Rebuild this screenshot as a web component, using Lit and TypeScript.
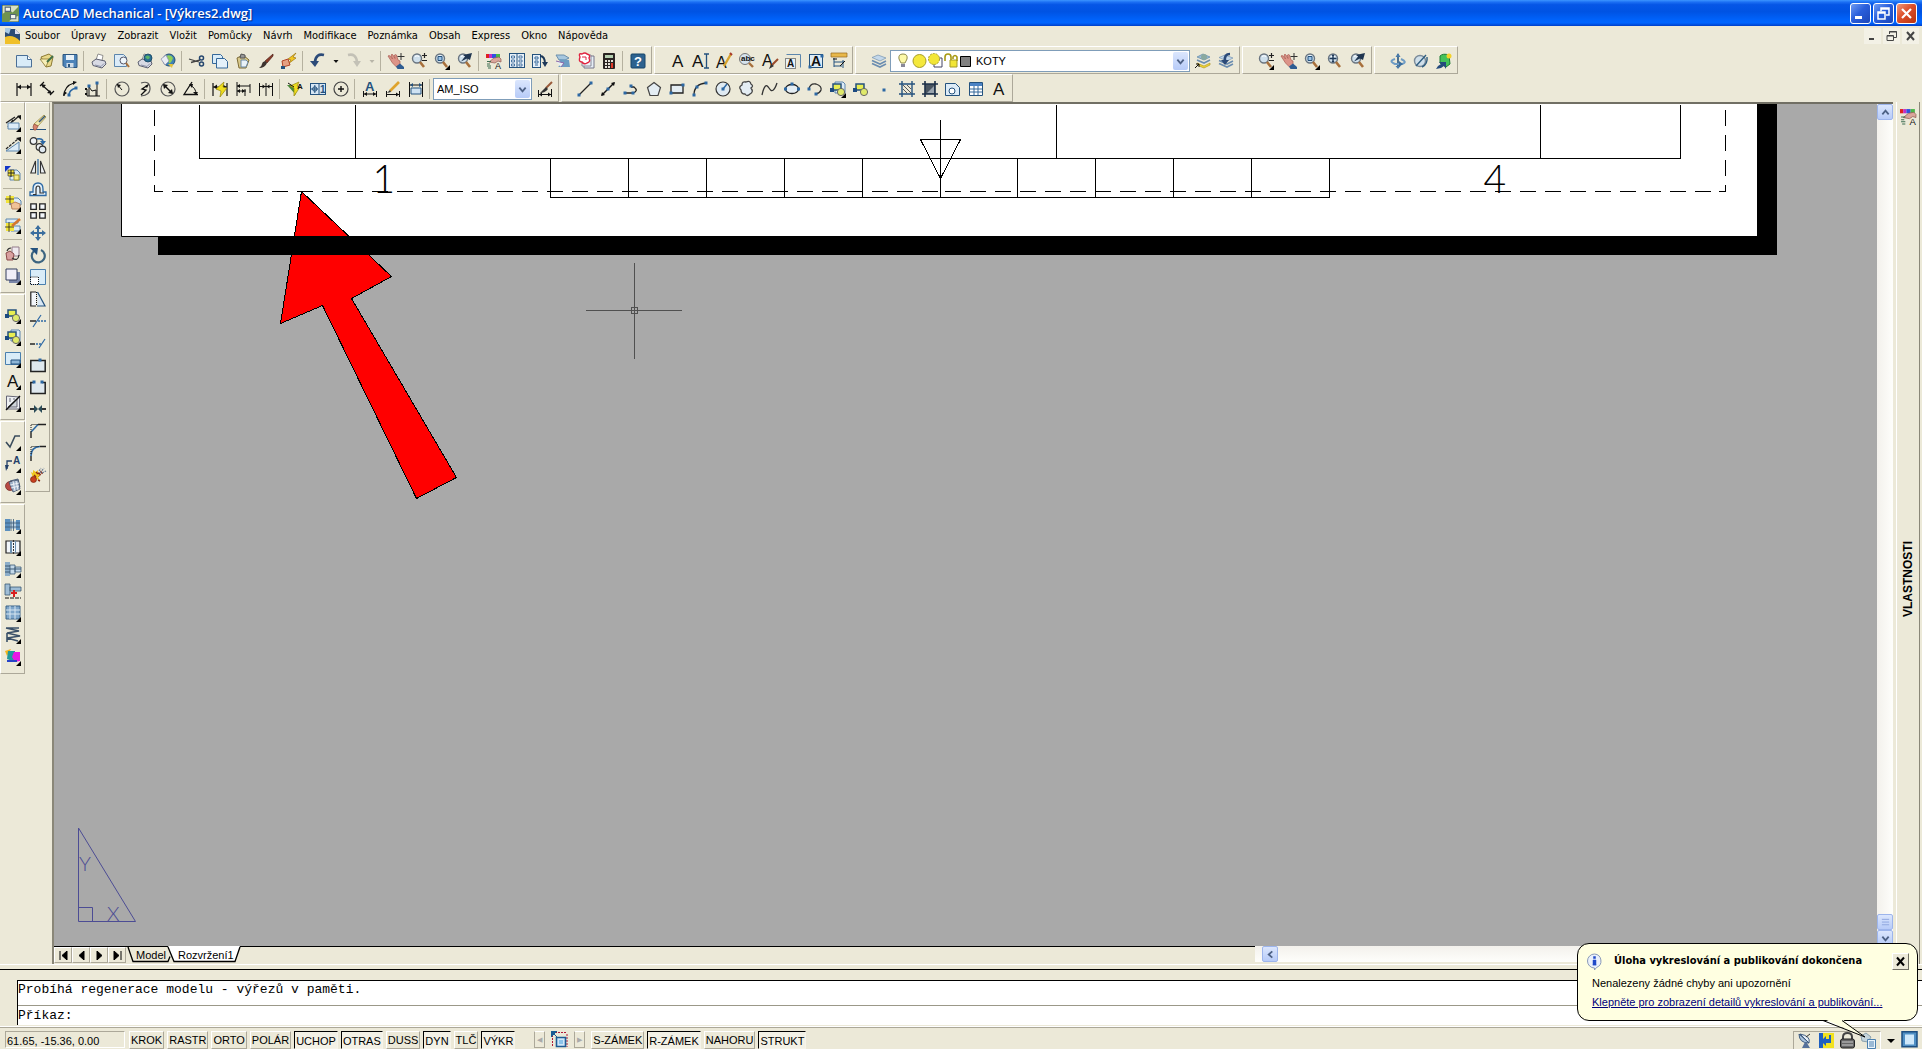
import { LitElement, html, css, svg, nothing, TemplateResult } from "lit";
import { customElement, property } from "lit/decorators.js";
import { classMap } from "lit/directives/class-map.js";

const letter = (t: string, x: number, y: number, size: number, color = "#111", weight = 400) =>
  svg`<text x=${x} y=${y} font-family="Liberation Sans, sans-serif" font-size=${size} font-weight=${weight} fill=${color}>${t}</text>`;

const lens = svg`<circle cx="6" cy="5.5" r="4.5" fill="#cfe0ec" stroke="#6a7580" stroke-width="1.4"/><path d="M9 9l4 5" stroke="#a8703c" stroke-width="2.6"/><path d="M4 3.500q2-1.500 4 0" stroke="#fff" fill="none"/>`;
const hand = svg`<path d="M0 3q1-1 2 0l2.500 3L3 2q1-1.500 2 0l2 3.500L6.500 2q1-1 2 0L10 7l2 1v3.500L8.500 14l-4-4z" fill="#dc9488" stroke="#a85a50" stroke-width=".7"/><path d="M8 13.500l4-3 4 3.500V16H9.500z" fill="#2f5d92"/><path d="M13 0v7M9.500 3.500h7" stroke="#333"/>`;
const zoomPrev = svg`${lens}<path d="M15 0L6 2l2 1.500-4 5 6-3 3 1.500z" fill="#1f3550"/>`;
const zoomRt = svg`${lens}<path d="M13.500 0v5M11 2.500h5M11 7.500h5" stroke="#222" stroke-width="1.200"/>`;
const zoomWin = svg`${lens}<path d="M4 3.500h4v4H4z" fill="#9cc3e6" stroke="#24527e"/>`;
const globe = svg`<circle cx="11" cy="5" r="4" fill="#2a6f93" stroke="#17425f" stroke-width=".8"/><path d="M8 4q3-3 5 0-1 3-3 2z" fill="#59b36a"/>`;
const printer = svg`<path d="M5 7l2-6 5 1.500-1 5z" fill="#fff" stroke="#777" stroke-width=".8"/><path d="M1 9l4-3 9 2 1 3-4 4L2 12.500z" fill="#d8dae4" stroke="#5d6070"/><path d="M4 12l6 1.500 3-3" stroke="#8990a8" fill="none"/>`;
const shapes = svg`<rect x="3" y="3" width="8" height="6" fill="#e8ee52" stroke="#24527e" stroke-width="1.500"/><circle cx="11" cy="11" r="3.600" fill="#dfe96a" stroke="#666"/><rect x="0" y="7" width="4" height="4" fill="#1c4a80"/>`;
const layers = svg`<path d="M1 4.500L7 2l8 3-6 3z" fill="#c4d8ea" stroke="#7593b0" stroke-width=".7"/><path d="M1 7.500l8 3.500 6-3M1 10.500l8 3.500 6-3" fill="none" stroke="#6b8db0" stroke-width="1.600"/>`;
const props = svg`<path d="M0 1h3v4H0z" fill="#e02020"/><path d="M3 1h3v4H3z" fill="#c030c8"/><path d="M6 1h4v4H6z" fill="#2f50e0"/><path d="M10 1h4v4h-4z" fill="#48b848"/><path d="M3 9l5-4 5-1 2 2v3l-3-1-3 2z" fill="#dba59b" stroke="#8f5b52" stroke-width=".7"/><path d="M1 8.500h4M1 11h3M1 13h4M2 15h3" stroke="#3b6c50"/>${letter("A", 9, 16, 9)}`;
const dimH = svg`<path d="M1 2v13M15 2v13M1 6h14" stroke="#111" stroke-width="1.200"/><path d="M1.500 6L5 3.500v5zM14.500 6L11 3.500v5z" fill="#111"/>`;
const node = (x: number, y: number) => svg`<rect x=${x - 1.5} y=${y - 1.5} width="3" height="3" fill="#2c68a4"/>`;

const ICONS: Record<string, TemplateResult> = {
  new: svg`<path d="M.5 2.500h11l4 4v7.500H.5z" fill="#d9ecf8" stroke="#4a6f96"/><path d="M11.500 2.500v4h4" fill="#fff" stroke="#4a6f96"/>`,
  open: svg`<path d="M2 4l8-3 4 3-2 9-5 1z" fill="#e9d98a" stroke="#8c7a34"/><path d="M1 6l6 8 3-8z" fill="#f7efb8" stroke="#8c7a34" stroke-width=".8"/><path d="M8 9l6-6" stroke="#3f6f46" stroke-width="2"/>`,
  save: svg`<path d="M1 1.500h14v13H3l-2-2z" fill="#4c83b9" stroke="#2d567f"/><path d="M4 2h8v5H4z" fill="#e8f1f8"/><path d="M4.500 10h7v4.500h-7z" fill="#cfdce8"/><path d="M6 11h2v3H6z" fill="#2d567f"/>`,
  print: printer,
  preview: svg`<path d="M.5 1.500h9l3 3v9H.5z" fill="#dcecf8" stroke="#5c86ad"/><circle cx="9.500" cy="7.500" r="3.500" fill="#eef6fb" stroke="#556"/><path d="M12 10l3 4" stroke="#a8703c" stroke-width="2"/>`,
  publish: svg`${printer}${globe}`,
  web: svg`<circle cx="9" cy="7" r="6" fill="#3f82b5" stroke="#274f72"/><path d="M6 3q5-2 7 2-2 6-4 5z" fill="#8fcf58"/><path d="M1 6l5-4 3 6-4 4z" fill="#e9edf4" stroke="#88a" stroke-width=".7"/><path d="M8 11l4 4 1-4z" fill="#e6c43a"/>`,
  cut: svg`<path d="M0 6l10 3M2 9.500l9-2.500" stroke="#444" stroke-width="1.300"/><circle cx="12.500" cy="5" r="2" fill="none" stroke="#24466e" stroke-width="1.500"/><circle cx="12.500" cy="11" r="2" fill="none" stroke="#24466e" stroke-width="1.500"/>`,
  copy: svg`<path d="M.5 1.500h8l2 2v7H.5z" fill="#d9ecf8" stroke="#35689a"/><path d="M4.500 5.500h8l3 3V15h-11z" fill="#e4f1fa" stroke="#35689a"/>`,
  paste: svg`<path d="M2 5l6-3 6 5-3 8H4z" fill="#d9c98a" stroke="#7e6c35"/><path d="M6 1l4 1v3H5z" fill="#999" stroke="#555"/><path d="M6 7h5l2 2-2 5H6z" fill="#e9f2f8" stroke="#6b88a5"/>`,
  brush: svg`<path d="M15 1L7 8l2 2 6-7z" fill="#8b3b28" stroke="#4a2018" stroke-width=".7"/><path d="M7 8l2 2q-2 5-8 5 3-2 3-4t3-3z" fill="#3d3430"/>`,
  block: svg`<path d="M15 0L7 6l3 1-3 4 8-6-3-1z" fill="#f0c520" stroke="#9c7410" stroke-width=".7"/><path d="M1 8l6-2 2 6-7 2z" fill="#e5a182" stroke="#b24526"/><path d="M0 13h4v3H0z" fill="#24527e"/>`,
  undo: svg`<path d="M14 2Q6 0 5 9" fill="none" stroke="#2b4a78" stroke-width="2.800"/><path d="M0 8h9l-4 6z" fill="#2b4a78"/>`,
  redo: svg`<path d="M2 2q8-2 9 7" fill="none" stroke="#c3c1b6" stroke-width="2.600"/><path d="M7 8h8l-4 6z" fill="#c3c1b6"/>`,
  pan: hand, zoomRt, zoomWin, zoomPrev,
  zoomAll: svg`${lens}<path d="M6 2v7M2.500 5.500h7" stroke="#1d3858" stroke-width="1.400"/><path d="M6 1l1.500 2h-3zM6 10l1.500-2h-3z" fill="#1d3858"/>`,
  props,
  design: svg`<rect x=".5" y=".5" width="15" height="14" fill="#e7f0f8" stroke="#24527e"/><path d="M8 1v13" stroke="#24527e"/><path d="M2.500 3h3v2h-3zM10 3h3v2h-3zM2.500 7h3v2h-3zM10 7h3v2h-3zM2.500 11h3v2h-3zM10 11h3v2h-3z" fill="#fff" stroke="#35689a" stroke-width=".9"/>`,
  palettes: svg`<rect x=".5" y="1.500" width="8" height="13" fill="#e7f0f8" stroke="#24527e"/><path d="M3 4h3v2H3zM3 8h3v2H3zM3 12h3" stroke="#35689a" fill="#fff"/><path d="M8 3q5 0 5 8" stroke="#1d3858" stroke-width="2" fill="none"/><path d="M10 9h6l-3 5z" fill="#1d3858"/>`,
  sheets: svg`<path d="M1 2h8l5 3-4 2H4z" fill="#a7c7de" stroke="#6d90ad"/><path d="M4 6l10 1 1 7H3l3-3z" fill="#6d9dc3"/><path d="M1 8l8 2-3 4" fill="#e8eff4" stroke="#86a"/>`,
  markup: svg`<path d="M6 3h10v12H6z" fill="#e6eef6" stroke="#778"/><path d="M4 2h9v11H4z" fill="#eef3f8" stroke="#889"/><path d="M2 4q-2-4 2-3 3-2 5 0 4 1 2 4 2 4-2 5-3 2-5-1-4 0-2-5z" fill="#fff" stroke="#e02440" stroke-width="1.400"/><path d="M4 4h4v3" stroke="#e02440" fill="none"/>`,
  calc: svg`<rect x="2" y="0" width="12" height="16" rx="1" fill="#2a2422"/><path d="M4 2h8v3H4z" fill="#b5cfb0"/><path d="M4 7h2v2H4zM7 7h2v2H7zM10 7h2v2h-2zM4 10h2v2H4zM7 10h2v2H7zM4 13h2v2H4zM7 13h2v2H7z" fill="#e6e2da"/><path d="M10 10h2v5h-2z" fill="#e03a2a"/>`,
  help: svg`<rect x="1" y="1" width="14" height="14" rx="1" fill="#2d628f" stroke="#174468"/>${letter("?", 4, 13, 13, "#fff", 700)}`,
  text: letter("A", 2, 14, 17),
  textI: svg`${letter("A", -1, 14, 17)}<path d="M11 1h5M11 15h5M13.500 1v14" stroke="#24527e" stroke-width="1.300"/>`,
  textEdit: svg`${letter("A", 0, 15, 16)}<path d="M15 1L8 13" stroke="#d6a32e" stroke-width="2.400"/><path d="M14 0l2 2" stroke="#a83a2a" stroke-width="2"/>`,
  textFind: svg`<circle cx="6" cy="6" r="5.500" fill="#d5e3ee" stroke="#777"/><path d="M10 10l4 4" stroke="#a8703c" stroke-width="2.400"/>${letter("abc", 2, 8, 8, "#111", 700)}`,
  textStyle: svg`${letter("A", 0, 13, 16)}<path d="M16 6l-6 6" stroke="#9a4a2a" stroke-width="2"/><path d="M9 11l3 2-5 3z" fill="#333"/>`,
  textScale: svg`<path d="M1.500 1.500h14v13" fill="none" stroke="#5c86ad"/><rect x=".5" y="5.500" width="10" height="10" fill="#e8f1f8" stroke="#222" stroke-dasharray="1 1"/>${letter("A", 2, 14, 10, "#111", 700)}`,
  textJust: svg`<rect x="1.500" y="1.500" width="13" height="13" fill="#dcebf7" stroke="#24527e"/>${letter("A", 3, 13, 14, "#111", 700)}${node(14, 3)}${node(2, 14)}`,
  textConv: svg`<path d="M0 0h16v4H0z" fill="#e8b84a" stroke="#96681e" stroke-width=".7"/><path d="M3 5v9M3 9h10M3 13h8M12 7v8" stroke="#24527e"/><path d="M2 6h4M14 8l-5 5" stroke="#111"/>`,
  layers,
  layerCur: svg`<path d="M2 4L8 1l7 3-6 3z" fill="#9cbdd6" stroke="#5f87a8" stroke-width=".7"/><circle cx="9" cy="4" r="3" fill="#8aa9a0"/><path d="M2 7l7 3 6-3" fill="none" stroke="#6b8db0" stroke-width="1.600"/><path d="M2 10l7 3 6-3v2l-6 3-5-2z" fill="#f2d633" stroke="#a88f1c" stroke-width=".6"/><path d="M0 15l4-4M1 11h3v3" stroke="#111" fill="none"/>`,
  layerPrev: svg`${layers}<path d="M12 1Q6 1 7 8" stroke="#2b4a78" stroke-width="2.600" fill="none"/><path d="M3 7h8l-4 5z" fill="#2b4a78"/>`,
  orbitUp: svg`<path d="M8 1v14" stroke="#24527e" stroke-width="1.600"/><path d="M8 0l2.500 4h-5zM8 16l2.500-3h-5z" fill="#4a7ba8"/><path d="M5 6q-7 2 0 5h7q6-2-1-5" fill="none" stroke="#6f9cc4" stroke-width="2"/><path d="M9 8l4 3-4 3z" fill="#3b6e9e"/>`,
  orbit: svg`<circle cx="7" cy="8" r="5.500" fill="#cfdfea" stroke="#7b8b99" stroke-width="1.400"/><path d="M3 13L13 2M14 4q1 7-5 10" stroke="#2f5d80" stroke-width="1.400" fill="none"/>`,
  render: svg`<path d="M4 3q3-3 9-1l1 9-4 3-6-4z" fill="#44c25a" stroke="#1d7a34"/><circle cx="13" cy="3" r="2.500" fill="#f4d22a"/><path d="M0 16l2-3 3-2-2-2h7v7L8 13l-3 2z" fill="#244a7c"/>`,
  dimH,
  dimAl: svg`<path d="M1 5l4-4M11 14l4-4M3 4l9 8" stroke="#111" stroke-width="1.200"/><path d="M2 3l5 1-3 3zM13 13l-5-1 3-3z" fill="#111"/>`,
  dimArc: svg`<path d="M2 15Q2 5 12 2" fill="none" stroke="#111" stroke-width="1.300"/><path d="M7 14q0-5 7-7" fill="none" stroke="#2c68a4" stroke-width="1.600"/><path d="M15 1l-4 3V0zM1 15l1-5 3 2z" fill="#111"/>${node(7, 14)}${node(14, 7)}`,
  dimOrd: svg`<path d="M4 15V6l3 4 4-1v6M2 8v7h13M12 3v12" stroke="#111" fill="none"/>${node(4, 5)}${node(12, 2)}<path d="M0 7h2v2H0zM0 12h2v2H0z" fill="#111"/>`,
  dimRad: svg`<circle cx="8" cy="8" r="7" fill="none" stroke="#555" stroke-width="1.200"/><path d="M8 9L3 3" stroke="#111"/><path d="M3 3l4 1-3 3z" fill="#111"/>`,
  dimJog: svg`<path d="M4 2q9-3 9 6 0 6-9 7" fill="none" stroke="#555" stroke-width="1.200"/><path d="M11 4L5 8l4 1-5 5" fill="none" stroke="#111" stroke-width="1.300"/><path d="M12 3l-2 4-2-2z" fill="#111"/>`,
  dimDia: svg`<circle cx="8" cy="8" r="7" fill="none" stroke="#555" stroke-width="1.200"/><path d="M4 4l8 8" stroke="#111" stroke-width="1.400"/><path d="M3 3l5 1-4 4zM13 13l-5-1 4-4z" fill="#111"/>`,
  dimAng: svg`<path d="M9 1L1 13.500h14" fill="none" stroke="#111" stroke-width="1.300"/><path d="M7 4q6 3 6 9" fill="none" stroke="#111"/><path d="M6 3l4 0-1 4zM13 14l-3-3h5z" fill="#111"/>`,
  dimQuick: svg`${dimH}<path d="M8 16l1-6-5-2L12 1l-1 5 4 1z" fill="#eedd1e" stroke="#95850c" stroke-width=".7"/>`,
  dimBase: svg`<path d="M2 1v14M2 5h13M2 10h9M15 3v9M10 8v7" stroke="#111" fill="none"/><path d="M2 5l3-2v4zM2 10l3-2v4zM10 10l-3-2v4z" fill="#111"/>`,
  dimCont: svg`<path d="M1.500 2v13M8 2v13M14.500 2v13M2 5.500h12" stroke="#111"/><path d="M7.500 5.500l-3-2v4zM8.500 5.500l3-2v4z" fill="#111"/>`,
  leader: svg`<path d="M0 4l7 0 2 10z" fill="#4a8a3a"/><path d="M7 15V7L3 5l9-4-2 4 3 1z" fill="#eedd1e" stroke="#95850c" stroke-width=".7"/>${letter("A", 10, 8, 8, "#111", 700)}<path d="M1 2l6 4" stroke="#111"/>`,
  tol: svg`<rect x=".5" y="2.500" width="15" height="11" fill="#d7e7f5" stroke="#24527e"/><path d="M9 2v11" stroke="#24527e"/><circle cx="4.800" cy="8" r="2.200" fill="none" stroke="#24527e"/><path d="M4.800 4v8M1 8h7" stroke="#24527e"/>${letter("1", 10, 12, 10, "#24527e", 700)}`,
  center: svg`<circle cx="8" cy="8" r="7" fill="none" stroke="#444" stroke-width="1.200"/><path d="M8 5v6M5 8h6" stroke="#111" stroke-width="1.400"/>`,
  dimText: svg`${letter("A", 3, 10, 13, "#24527e", 700)}<path d="M1.500 10v6M14.500 10v6M2 13h12" stroke="#111"/><path d="M2 13l3-2v4zM14 13l-3-2v4z" fill="#111"/>`,
  dimEdit: svg`<path d="M14 1L5 10" stroke="#dfa32c" stroke-width="2.600"/><path d="M2 12l3-3 1 2z" fill="#333"/><path d="M1.500 10v6M14.500 10v6M2 13.500h12" stroke="#111"/><path d="M14 13.500l-3-2v4z" fill="#111"/>`,
  dimUpd: svg`<path d="M1.500 1v15M14.500 1v15M2 4h12" stroke="#111"/><path d="M3 7h10v6H3z" fill="#cfe2f2" stroke="#24527e"/><path d="M2 4l3-2v4zM14 4l-3-2v4z" fill="#24527e"/>`,
  dimStyle: svg`<path d="M15 1L9 7" stroke="#9a5a3a" stroke-width="2"/><path d="M9 6l2 2q-3 4-8 4z" fill="#333"/><path d="M1.500 9v7M14.500 8v8M2 13.500h12" stroke="#111"/><path d="M2 13.500l3-2v4zM14 13.500l-3-2v4z" fill="#111"/>`,
  line: svg`<path d="M2 14L14 2" stroke="#222" stroke-width="1.300"/>${node(2, 14)}${node(14, 2)}`,
  xline: svg`<path d="M2 14L14 2" stroke="#111" stroke-width="1.500"/><path d="M15 1l-1 4-3-3zM1 15l1-4 3 3z" fill="#111"/>${node(8, 8)}`,
  pline: svg`<path d="M1 12h9q6-2 1-6H8" stroke="#222" stroke-width="1.300" fill="none"/>${node(2, 12)}${node(10, 12)}${node(8, 5)}`,
  polygon: svg`<path d="M8 1.500l6.500 5-2.500 8H4l-2.500-8z" fill="#e4edf3" stroke="#444" stroke-width="1.200"/>`,
  rect: svg`<path d="M2 4h12v8H2z" fill="#e4edf3" stroke="#222" stroke-width="1.300"/>${node(2, 12)}${node(14, 4)}`,
  arc: svg`<path d="M2 14Q2 3 14 2" stroke="#222" fill="none" stroke-width="1.300"/>${node(2, 14)}${node(5, 6)}${node(14, 2)}`,
  circle: svg`<circle cx="8" cy="8" r="7" fill="#dfeaf2" stroke="#333" stroke-width="1.200"/><path d="M8 8l4-5" stroke="#2c68a4" stroke-width="1.500"/>${node(8, 8)}`,
  cloud: svg`<path d="M4 4q0-4 4-3 4-2 5 2 3 2 0 4 3 4-1 6-3 3-5 0-4 0-4-4-3-3 1-5z" fill="#e4edf3" stroke="#444" stroke-width="1.300"/>`,
  spline: svg`<path d="M1 14q3-14 7-7t8-5" stroke="#333" fill="none" stroke-width="1.300"/>`,
  ellipse: svg`<ellipse cx="8" cy="8" rx="6.500" ry="4.500" fill="#e4edf3" stroke="#222" stroke-width="1.300"/>${node(8, 3)}${node(1.500, 8)}${node(14.500, 8)}`,
  ellArc: svg`<path d="M2 8q1-6 7-5 6 2 5 6-1 3-5 4" stroke="#333" fill="none" stroke-width="1.300"/>${node(2, 8)}${node(9, 13)}`,
  insert: svg`<path d="M5 1h8l2 2v9H5z" fill="#dcebf7" stroke="#5c86ad"/>${shapes}`,
  mkBlock: shapes,
  point: node(8, 9),
  hatch: svg`<path d="M3 0v16M13 0v16M0 3h16M0 13h16" stroke="#24527e" stroke-width="1.400"/><path d="M4 4l8 8M4 8l4 4M8 4l4 4" stroke="#555"/>`,
  gradient: svg`<path d="M3 3h10v10H3z" fill="#4a5560"/><path d="M3 0v16M13 0v16M0 3h16M0 13h16" stroke="#1d3048" stroke-width="1.600"/><path d="M5 12L12 5v7z" fill="#99a4ae"/>`,
  region: svg`<path d="M.5 2.500h10l4 4v8H.5z" fill="#dcebf7" stroke="#24527e"/><circle cx="7" cy="10" r="3" fill="#fff" stroke="#24527e"/>`,
  table: svg`<path d="M1.500 1.500h13v13h-13z" fill="#fff" stroke="#24527e"/><path d="M2 2h12v3H2z" fill="#4c83c4"/><path d="M2 8h12M2 11h12M6 5v9M10 5v9" stroke="#35689a"/>`,
  // side column, mechanical tools
  mLine: svg`<path d="M1 8L10 2M14 1L7 7M3 12L8 5" stroke="#222" stroke-width="1.300"/><path d="M16 0v5l-4-4z" fill="#111"/><path d="M3 8h11v6H3z" fill="#dcebf7" stroke="#5c86ad"/>`,
  mConstr: svg`<path d="M1 12L13 2" stroke="#222" stroke-width="1.200" stroke-dasharray="3 1"/><path d="M16 0v5l-5-4z" fill="#111"/><path d="M1 14h13V5z" fill="#dcebf7" stroke="#5c86ad"/>`,
  mView: svg`<path d="M0 0h6L0 6z" fill="#1236c8"/><path d="M5 4h7l3 3v7H5z" fill="#dcebf7" stroke="#5c86ad"/><path d="M3 4h6v6H3z" fill="#f2e43a" stroke="#222" stroke-width=".6"/><path d="M9 9h5v5H9z" fill="#f4ec8a" stroke="#a79a28"/><path d="M6 4v7M3 7h7" stroke="#222"/>`,
  mDetail: svg`<path d="M6 3h7l3 3v4H6z" fill="#dcebf7" stroke="#5c86ad"/><path d="M1 1h8v7H1z" fill="#f2e43a"/><path d="M5 0v10M0 4h9" stroke="#222" stroke-width=".8"/><path d="M6 9l4-2 5 2v5H7z" fill="#f0c298" stroke="#b9825a"/>`,
  mEditV: svg`<path d="M1 2h12v4H1zM6 9h9v5H6z" fill="#dcebf7" stroke="#5c86ad"/><path d="M1 6h8v8H1z" fill="#f2e43a"/><path d="M4 5v10M0 10h9" stroke="#222" stroke-width=".8"/><path d="M15 2L7 9" stroke="#d6762e" stroke-width="2.600"/>`,
  mPart: svg`<path d="M7 1h7v9H7z" fill="#efe9ee" stroke="#937b8a"/><path d="M1 7l4-2 4 3-1 6H2z" fill="#d9a0a0" stroke="#8a4a4a"/><path d="M7 12q6 4 7-3M2 5q1-3 4-3" stroke="#333" fill="none" stroke-width="1.200"/>`,
  mFrame: svg`<path d="M4 4h11v11H4z" fill="#7a86a8"/><path d="M1 1h11v11H1z" fill="#f0eef8" stroke="#333c5c"/>`,
  mSheet: svg`<path d="M.5 1.500h15v12H.5z" fill="#d9ecf8" stroke="#4a7fae"/><path d="M6 9h9v4H6z" fill="#8db5d6" stroke="#24527e"/>`,
  mBlocks: shapes,
  mInsert: svg`<path d="M6 1h8l1 1v10H6z" fill="#dcebf7" stroke="#5c86ad"/>${shapes}`,
  mDim: svg`<path d="M1.500 1v13h13V2z" fill="#eef0f2" stroke="#667"/><path d="M5 3v4M9 3v2M3 12l9-8v8z" fill="#cfd4da" stroke="#667"/><path d="M1 15L15 1" stroke="#111" stroke-width="1.400"/>`,
  surf: svg`<path d="M1 8l4 5L10 2h5" fill="none" stroke="#3a4c5c" stroke-width="1.600"/>`,
  note: svg`<path d="M2 13V5h5" stroke="#24406a" fill="none" stroke-width="1.300"/><path d="M0 9h4l-3 6z" fill="#24406a"/>${letter("A", 8, 8, 10, "#24406a", 700)}`,
  bom: svg`<path d="M5 3l8-2 2 8-7 3z" fill="#b8c8da" stroke="#4a5b74"/><circle cx="5" cy="8" r="4.500" fill="#b84a44" stroke="#6f2824" stroke-width=".7"/><path d="M4 4l9-2 2 9-7 3z" fill="#9fb2c9" stroke="#3f4f6a" stroke-width=".8"/><path d="M5 7l9-2M6 10l8-2M8 3l2 10M11 3l2 9" stroke="#f0f4f8" stroke-width=".9"/>`,
  screw: svg`<path d="M0 2h5v12H0zM11 3h4v10h-4z" fill="#5b8fbe"/><path d="M5 4h6v8H5z" fill="#b9cfe0"/><path d="M6 2v12M8.500 2v12M0 6h15M0 10h15" stroke="#3a5874" stroke-width=".8"/>`,
  hole: svg`<path d="M1 2h14v12H1z" fill="#f2f6fa" stroke="#222" stroke-width="1.200"/><path d="M5 2h2v12H5zM10 2h1v12h-1z" fill="#6c90b0"/><path d="M8.500 1v14" stroke="#333" stroke-dasharray="2 1"/>`,
  shaft: svg`<path d="M0 1h5v14H0z" fill="#8cadc9"/><path d="M5 4h5v9H5zM10 6h6v5h-6z" fill="#c3d8e8" stroke="#3a5874" stroke-width=".8"/><path d="M0 5h5M0 11h5M0 8h16" stroke="#3a5874"/>`,
  bolt: svg`<path d="M0 1h5v11H0zM5 4h11v4H5z" fill="#9fbdd6" stroke="#3a5874" stroke-width=".8"/><path d="M6 10h6M9 7v7" stroke="#d81e1e" stroke-width="2"/><path d="M0 15h16" stroke="#111" stroke-dasharray="4 1"/>`,
  steel: svg`<path d="M1 1h14v13H1z" fill="#7fa6ca" stroke="#3a6288"/><path d="M1 5h14M1 9h14M5 1v13M10 1v13" stroke="#d8e6f1"/>`,
  spring: svg`<path d="M1 1l13 3L2 6l13 3L2 11l11 3M1 1h13M2 15V6" stroke="#3a5068" stroke-width="1.600" fill="none"/>`,
  fea: svg`<path d="M0 2l6-2-4 7z" fill="#f2b51e"/><path d="M3 2h7v11L2 10z" fill="#21989c"/><path d="M9 3h6v9l-5 1-3-5z" fill="#e616e6"/><path d="M2 12h10" stroke="#2743c8" stroke-width="2"/>`,
  // side column, modify tools
  erase: svg`<path d="M0 14.500h16" stroke="#24527e"/><path d="M14 0l2 2-8 9-4-2z" fill="#f0e7b2" stroke="#9c8a3a" stroke-width=".8"/><path d="M15 1L9 7" stroke="#3a5874" stroke-width="1.600"/><path d="M4 9l4 2-2 4H4l-1-3z" fill="#d9836e" stroke="#8f4a3a" stroke-width=".7"/>`,
  copyObj: svg`<circle cx="3.500" cy="4" r="3.300" fill="#eef2f5" stroke="#333" stroke-width="1.200"/><circle cx="9.500" cy="10" r="3.300" fill="#eef2f5" stroke="#333" stroke-width="1.200"/><circle cx="12.500" cy="12.500" r="3.300" fill="#dfe8ee" stroke="#333" stroke-width="1.200"/><path d="M7 2q6-1 6 3" stroke="#2c68a4" stroke-width="1.600" fill="none"/><path d="M10 4h6l-3 4z" fill="#2c68a4"/>`,
  mirror: svg`<path d="M5.500 2v12H.8zM10.500 2v12h4.700z" fill="#eef2f5" stroke="#333" stroke-width="1.100"/><path d="M8 0v16" stroke="#2c68a4" stroke-width="1.200"/>`,
  offset: svg`<path d="M0 14.500h16V11h-3V8q0-6-5-6T3 8v3H0z" fill="#e2f0fa" stroke="#2c68a4" stroke-width="1.300"/><path d="M3 13.500h3V8q0-3 2-3t2 3v4h4" fill="none" stroke="#333" stroke-width="1.200"/>`,
  array: svg`<path d="M.8.8h5.500v5.500H.8zM9.700.8h5.500v5.500H9.700zM.8 9.700h5.500v5.500H.8zM9.700 9.700h5.500v5.500H9.700z" fill="#f2f6fa" stroke="#222" stroke-width="1.300"/>`,
  move: svg`<path d="M8 1v14M1 8h14" stroke="#3b6e9e" stroke-width="2"/><path d="M8 0l3 4H5zM8 16l3-4H5zM0 8l4-3v6zM16 8l-4-3v6z" fill="#3b6e9e"/>`,
  rotate: svg`<path d="M4 4a6.500 6.500 0 1 0 7-1" stroke="#3b6480" stroke-width="2.200" fill="none"/><path d="M0 1l8 0-1 7z" fill="#24527e"/>`,
  scale: svg`<path d="M.5.5h15v15H.5z" fill="#d9ecf8" stroke="#4a7fae"/><path d="M.5 8h8v7.500h-8z" fill="#fff" stroke="#111" stroke-dasharray="1 1"/>`,
  stretch: svg`<path d="M6 1H.8v14H6" fill="#f2f6fa" stroke="#222" stroke-width="1.200"/><path d="M7.500 1l7.500 14H7.500z" fill="#d9e8f4"/><path d="M7.500 1l7.500 14H7" fill="none" stroke="#24527e" stroke-width="1.200"/><path d="M6.500 1v14" stroke="#111" stroke-dasharray="1 1"/>`,
  trim: svg`<path d="M0 8h6" stroke="#333" stroke-width="1.600"/><path d="M8 8h8" stroke="#2c68a4" stroke-width="1.600" stroke-dasharray="2 1"/><path d="M3 14L11 2" stroke="#2c68a4" stroke-width="1.200"/>`,
  extend: svg`<path d="M0 9h5" stroke="#333" stroke-width="1.600"/><path d="M6 9h5" stroke="#2c68a4" stroke-width="1.600" stroke-dasharray="2 1"/><path d="M9 13L15 4" stroke="#2c68a4" stroke-width="1.200"/>`,
  breakPt: svg`<path d="M.8 3.500h14.400v11H.8z" fill="#dfe8ee" stroke="#222" stroke-width="1.500"/>${node(10, 3)}`,
  break2: svg`<path d="M4 3.500H.8v11h14.400v-11H12" fill="#dfe8ee" stroke="#222" stroke-width="1.500"/>${node(4, 3)}${node(12, 3)}`,
  join: svg`<path d="M0 8h5M11 8h5" stroke="#333" stroke-width="2"/><path d="M4 4l4 4-4 4zM12 4L8 8l4 4z" fill="#2b4c58"/>`,
  chamfer: svg`<path d="M1 15V9M8 1.500h8" stroke="#222" stroke-width="1.400"/><path d="M1 9l7-7.500" stroke="#2c68a4" stroke-width="1.600"/><path d="M1 9V1.500h7" stroke="#111" stroke-dasharray="1 1" fill="none"/>`,
  fillet: svg`<path d="M1 16v-5M10 1.500h6" stroke="#222" stroke-width="1.400"/><path d="M1 11q0-9 9-9.500" stroke="#2c68a4" stroke-width="1.600" fill="none"/><path d="M1 9V1.500h8" stroke="#111" stroke-dasharray="1 1" fill="none"/>`,
  explode: svg`<path d="M3 12L12 5" stroke="#8f2a14" stroke-width="3.500" stroke-dasharray="4 1"/><path d="M1 5l2 1 0-3 3 2 2-2 0 4 2 1-2 2 2 3-4-1-2 2-1-3z" fill="#f0c820"/><circle cx="3.500" cy="12.500" r="3" fill="#c8401e" stroke="#7a2410" stroke-width=".7"/><path d="M6 5l2 2M8 13l2 1M4 8l2 2" stroke="#8f2a14" stroke-width="1.400"/><path d="M10 6l4-5M12 6l4-2M9 4l2-3" stroke="#6b7f96" stroke-width="1.200" stroke-dasharray="2 1"/>`,
};

interface Tool { id?: string; label?: string; fly?: boolean; menu?: boolean; off?: boolean; sep?: boolean; }
const SEP: Tool = { sep: true };
const t = (id: string, label: string, o: Partial<Tool> = {}): Tool => ({ id, label, ...o });

const STANDARD: Tool[] = [
  t("new", "Nový"), t("open", "Otevřít"), t("save", "Uložit"), SEP,
  t("print", "Tisk"), t("preview", "Náhled"), t("publish", "Publikovat"), t("web", "3D DWF"), SEP,
  t("cut", "Vyjmout"), t("copy", "Kopírovat"), t("paste", "Vložit"), t("brush", "Kopie vlastností"), t("block", "Editor bloků"), SEP,
  t("undo", "Zpět", { menu: true }), t("redo", "Znovu", { menu: true, off: true }), SEP,
  t("pan", "Posun"), t("zoomRt", "Zoom"), t("zoomWin", "Zoom okno", { fly: true }), t("zoomPrev", "Zoom předchozí"), SEP,
  t("props", "Vlastnosti"), t("design", "DesignCenter"), t("palettes", "Palety nástrojů"), t("sheets", "Správce sad"), t("markup", "Revize"), t("calc", "Kalkulačka"), SEP,
  t("help", "Nápověda"),
];
const TEXT: Tool[] = [
  t("text", "Odstavcový text"), t("textI", "Řádkový text"), t("textEdit", "Upravit text"), t("textFind", "Najít"),
  t("textStyle", "Styl textu"), t("textScale", "Měřítko textu"), t("textJust", "Zarovnání textu"), t("textConv", "Převod vzdálenosti"),
];
const ZOOM: Tool[] = [
  t("zoomRt", "Zoom", { fly: true }), t("pan", "Posun"), t("zoomWin", "Zoom okno", { fly: true }),
  t("zoomAll", "Zoom vše"), t("zoomPrev", "Zoom předchozí"),
];
const ORBIT: Tool[] = [t("orbitUp", "Omezený orbit"), t("orbit", "Volný orbit"), t("render", "Render")];
const DIMS: Tool[] = [
  t("dimH", "Přímá kóta"), t("dimAl", "Šikmá kóta"), t("dimArc", "Délka oblouku"), t("dimOrd", "Staničení"), SEP,
  t("dimRad", "Poloměr"), t("dimJog", "Lomená kóta"), t("dimDia", "Průměr"), t("dimAng", "Úhel"), SEP,
  t("dimQuick", "Rychlá kóta"), t("dimBase", "Od základny"), t("dimCont", "Řetězová kóta"), SEP,
  t("leader", "Odkaz"), t("tol", "Tolerance"), t("center", "Středová značka"), SEP,
  t("dimText", "Upravit kótu"), t("dimEdit", "Upravit text kóty"), t("dimUpd", "Aktualizovat kótu"), SEP,
];
const DRAW: Tool[] = [
  t("line", "Úsečka"), t("xline", "Přímka"), t("pline", "Křivka"), t("polygon", "Polygon"), t("rect", "Obdélník"),
  t("arc", "Oblouk"), t("circle", "Kružnice"), t("cloud", "Revizní obláček"), t("spline", "Spline"), t("ellipse", "Elipsa"),
  t("ellArc", "Eliptický oblouk"), t("insert", "Vložit blok", { fly: true }), t("mkBlock", "Vytvořit blok"), t("point", "Bod"),
  t("hatch", "Šrafy"), t("gradient", "Přechod"), t("region", "Oblast"), t("table", "Tabulka"), t("text", "Odstavcový text"),
];
const f = { fly: true };
const SIDE_MECH: Tool[][] = [
  [t("mLine", "Čáry", f), t("mConstr", "Konstrukční čáry", f), SEP, t("mView", "Pohled"), SEP,
    t("mDetail", "Detail", f), t("mEditV", "Úpravy pohledu", f), SEP, t("mPart", "Součást"), t("mFrame", "Rámeček", f)],
  [t("mBlocks", "Bloky", f), t("mInsert", "Vložit", f), t("mSheet", "List", f), t("text", "Text", f), t("mDim", "Kóty", f)],
  [t("surf", "Drsnost povrchu", f), t("note", "Poznámka", f), t("bom", "Kusovník", f)],
  [t("screw", "Šrouby", f), t("hole", "Díry", f), t("shaft", "Hřídele", f), t("bolt", "Čepy"), t("steel", "Profily", f),
    t("spring", "Pružiny", f), t("fea", "MKP", f)],
];
const SIDE_MODIFY: Tool[] = [
  t("erase", "Vymazat"), t("copyObj", "Kopírovat"), t("mirror", "Zrcadlit"), t("offset", "Ekvidistanta"), t("array", "Pole"),
  t("move", "Posunout"), t("rotate", "Otočit"), t("scale", "Měřítko"), t("stretch", "Protáhnout"), t("trim", "Oříznout"),
  t("extend", "Prodloužit"), t("breakPt", "Přerušit v bodě"), t("break2", "Přerušit"), t("join", "Spojit"),
  t("chamfer", "Zkosit"), t("fillet", "Zaoblit"), t("explode", "Rozložit"),
];

@customElement("cad-toolbar")
class CadToolbar extends LitElement {
  @property({ attribute: false }) tools: Tool[] = [];
  @property({ type: Boolean, reflect: true }) vertical = false;

  static styles = css`
    :host { display: flex; box-sizing: border-box; background: #ece9d8; border: 1px solid; border-color: #fff #aca899 #aca899 #fff; padding: 3px 2px 0 11px; }
    :host([vertical]) { flex-direction: column; padding: 9px 0 5px 0; align-items: center; width: 25px; }
    .tool { width: 23px; height: 22px; padding: 0; border: 0; background: none; display: flex; align-items: center; justify-content: center; flex: none; }
    .drop { width: 13px; }
    .icon { display: block; width: 16px; height: 16px; overflow: visible; }
    .sep { width: 1px; height: 20px; margin: 1px 3px 1px 2px; background: #b5b19f; flex: none; }
    :host([vertical]) .sep { width: 19px; height: 1px; margin: 3px 0; }
    :host([vertical]) .tool { width: 21px; }
  `;

  render() {
    return html`${this.tools.map((x) => x.sep ? html`<span class="sep"></span>` : html`
      <button class="tool" aria-label=${x.label!} ?disabled=${x.off}>
        <svg class="icon" viewBox="0 0 16 16">${ICONS[x.id!]}${x.fly ? svg`<path d="M16 12v5h-5z" fill="#000"/>` : nothing}</svg>
      </button>
      ${x.menu ? html`<button class="tool drop" aria-label="${x.label} – seznam" ?disabled=${x.off}>
        <svg class="icon" viewBox="0 0 16 16"><path d="M5.500 7h5l-2.500 3z" fill=${x.off ? "#b8b5a8" : "#111"}/></svg></button>` : nothing}
    `)}<slot></slot>`;
  }
}

const chevron = (d: string) => html`<svg class="chev" viewBox="0 0 10 10"><path d=${d} fill="none" stroke="#4d6185" stroke-width="2"/></svg>`;
const DOWN = "M1.500 3l3.500 4 3.500-4";
const UP = "M1.500 7L5 3l3.500 4";
const LEFT = "M7 1.500L3 5l4 3.500";

const MENUS = ["Soubor", "Úpravy", "Zobrazit", "Vložit", "Pomůcky", "Návrh", "Modifikace", "Poznámka", "Obsah", "Express", "Okno", "Nápověda"];
const MODES_A: [string, boolean][] = [["KROK", false], ["RASTR", false], ["ORTO", false], ["POLÁR", false], ["UCHOP", true],
  ["OTRAS", true], ["DUSS", false], ["DYN", true], ["TLČ", false], ["VÝKR", true]];
const MODES_B: [string, boolean][] = [["S-ZÁMEK", false], ["R-ZÁMEK", true], ["NAHORU", false], ["STRUKT", true]];
const CELL_X = [496, 574, 652, 730, 808, 886, 963, 1041, 1119, 1197, 1275];

@customElement("app-root")
class AppRoot extends LitElement {
  static styles = css`
    :host { display: flex; flex-direction: column; height: 100vh; overflow: hidden; position: relative; background: #ece9d8; color: #000; font: 11px/14px "Liberation Sans", Arial, sans-serif; }
    button, select, input { font: inherit; color: inherit; border-radius: 0; margin: 0; }
    .title { display: flex; align-items: center; height: 26px; flex: none; padding: 0 5px 0 2px; box-sizing: border-box;
      background: linear-gradient(180deg, #3c95ff 0, #1c70f4 8%, #0656e6 18%, #0053e3 45%, #0062fa 75%, #0065ff 88%, #003fc8 100%); }
    .name { margin: 0; flex: 1; padding-left: 4px; color: #fff; font: 600 13px/20px "Open Sans", "Noto Sans", sans-serif; text-shadow: 1px 1px 1px #0a2a80; white-space: nowrap; }
    .logo { width: 17px; height: 17px; }
    .wins { display: flex; gap: 2px; }
    .win { width: 21px; height: 21px; padding: 0; border: 1px solid #fff; border-radius: 3px; background: linear-gradient(135deg, #6f9cf2, #2a5fdc 45%, #1c46b8); display: flex; align-items: center; justify-content: center; }
    .shut { background: linear-gradient(135deg, #f09a7c, #dd4f2a 45%, #b8330f); }
    .g { width: 15px; height: 15px; display: block; }
    .menu { display: flex; align-items: center; height: 20px; flex: none; padding: 0 3px 0 5px; }
    .menuitem { border: 0; background: none; padding: 0; margin-right: 11px; font: 11px/14px "DejaVu Sans Condensed", "Noto Sans", sans-serif; }
    .doc { width: 15px; height: 16px; margin-right: 5px; }
    .mdi { display: flex; gap: 2px; margin-left: auto; }
    .mdib { width: 17px; height: 16px; border: 0; padding: 0; background: #f3f1e6; display: flex; align-items: center; justify-content: center; }
    .row { display: flex; height: 28px; flex: none; gap: 2px; }
    .combo { display: flex; align-items: center; background: #fff; border: 1px solid #7f9db9; height: 22px; box-sizing: border-box; margin-right: 1px; padding-left: 3px; flex: none; position: relative; }
    .combo select { appearance: none; border: 0; background: none; outline: 0; height: 20px; padding: 0 20px 0 0; flex: 1; min-width: 0; }
    .arrow { position: absolute; right: 1px; top: 1px; bottom: 1px; width: 15px; border-radius: 2px; background: linear-gradient(#dbe6fd, #b7cbf8); display: flex; align-items: center; justify-content: center; pointer-events: none; }
    .chev { width: 9px; height: 9px; }
    .dimstyle { width: 99px; }
    .layer { width: 300px; padding-left: 5px; }
    .li { width: 15px; height: 16px; margin-right: 1px; }
    .solo { width: 23px; height: 22px; padding: 0; border: 0; background: none; display: flex; align-items: center; justify-content: center; }
    .solo svg { width: 16px; height: 16px; overflow: visible; }
    .main { display: flex; flex: 1; min-height: 0; }
    .side { display: flex; gap: 0; width: 52px; flex: none; align-items: flex-start; }
    .stack { display: flex; flex-direction: column; gap: 1px; }
    .frame { flex: 1; min-width: 0; display: flex; flex-direction: column; border-left: 2px solid #8a8778; border-top: 2px solid #716f64; }
    .view { flex: 1; min-height: 0; display: flex; }
    .canvas { flex: 1; min-width: 0; position: relative; background: #a9a9a9; overflow: hidden; }
    .sheet { display: block; width: 100%; height: 100%; }
    .ucs { position: absolute; left: 20px; bottom: 20px; width: 64px; height: 104px; overflow: visible; }
    .vbar { width: 16px; flex: none; background: linear-gradient(90deg, #f3f1ec, #fefefb); display: flex; flex-direction: column; }
    .sb { width: 16px; height: 16px; border: 1px solid #9db5ec; border-radius: 2px; background: linear-gradient(#dbe6fd, #b7cbf8); padding: 0; display: flex; align-items: center; justify-content: center; flex: none; }
    .grow { flex: 1; }
    .tabs { display: flex; height: 18px; flex: none; align-items: flex-start; }
    .tabrow { display: flex; flex: 0 0 1201px; max-width: 66%; box-sizing: border-box; height: 18px; border-top: 1px solid #000; }
    .nav { width: 18px; height: 16px; border: 1px solid; border-color: #fff #aca899 #aca899 #fff; background: #ece9d8; padding: 0; display: flex; align-items: center; justify-content: center; }
    .nav svg { width: 9px; height: 9px; }
    .tab { border: 0; padding: 0; height: 15px; background: none; position: relative; display: block; text-align: left; }
    .tab span { position: relative; padding-left: 8px; }
    .tab svg { position: absolute; inset: 0; width: 100%; height: 100%; overflow: visible; }
    .model { margin-left: 2px; width: 42px; }
    .layout { width: 70px; }
    .hbar { flex: 1; height: 16px; background: linear-gradient(#f3f1ec, #fefefb); display: flex; padding-left: 7px; }
    .palette { width: 24px; flex: none; margin-left: 3px; margin-right: 2px; border-right: 1px solid #8a8778; border-left: 1px solid #fff; display: flex; flex-direction: column; align-items: center; padding-top: 6px; box-sizing: border-box; }
    .palette .icon { width: 17px; height: 17px; }
    .above { flex: 6; }
    .below { flex: 5; }
    .ptitle { margin: 0; writing-mode: vertical-rl; transform: rotate(180deg); font: 700 12px/16px "Liberation Sans", sans-serif; }
    .cmd { flex: none; border-top: 1px solid #fff; padding-top: 4px; }
    .cmdin { border-top: 1px solid #000; padding: 10px 0 1px 17px; }
    .box { background: #fff; border-top: 1px solid #000; border-left: 1px solid #000; font: 13px/18px "Liberation Mono", monospace; }
    .hist { height: 25px; box-sizing: border-box; border-bottom: 1px solid #9b9888; }
    .prompt { display: flex; height: 19px; align-items: flex-end; }
    .prompt input { flex: 1; border: 0; outline: 0; background: none; padding: 0 4px; height: 18px; }
    .status { flex: none; height: 23px; box-sizing: border-box; border-top: 1px solid #fff; box-shadow: inset 0 1px #aca899; padding: 4px 4px 0 5px; display: flex; gap: 3px; }
    .coord { width: 120px; box-sizing: border-box; height: 17px; border: 1px solid; border-color: #aca899 #fff #fff #aca899; padding-left: 1px; line-height: 18px; }
    .mode { height: 18px; padding: 1px 1px 0; border: 1px solid; border-color: #fff #aca899 #aca899 #fff; background: #ece9d8; line-height: 15px; white-space: nowrap; }
    .on { border-color: #000 #f6f4ea #f6f4ea #000; background: #f3f1e6; padding-top: 2px; }
    .first { margin-left: 1px; }
    .vp { display: flex; gap: 6px; margin-left: 16px; margin-right: 3px; }
    .vpb { width: 11px; height: 17px; border: 1px solid; border-color: #fff #aca899 #aca899; background: none; padding: 0; color: #aaa; font-size: 7px; }
    .vpi { width: 17px; height: 17px; border: 0; padding: 0; background: none; }
    .tray { margin-left: auto; display: flex; gap: 4px; border: 1px solid; border-color: #aca899 #fff #fff #aca899; height: 17px; padding: 0 3px; }
    .tray svg, .vpi svg, .max svg { width: 17px; height: 17px; display: block; }
    .tdrop { width: 14px; height: 17px; border: 0; padding: 0; background: none; }
    .max { width: 17px; height: 17px; border: 0; padding: 0; background: none; }
    .balloon { position: absolute; right: 4px; bottom: 28px; width: 341px; height: 78px; box-sizing: border-box; background: #ffffe1; border: 1px solid #000; border-radius: 12px; padding: 8px 8px 0; }
    .bhead { display: flex; align-items: center; height: 18px; }
    .btitle { margin: 0; flex: 1; font: 700 11px/16px "DejaVu Sans Condensed", sans-serif; padding-left: 11px; white-space: nowrap; }
    .info { width: 17px; height: 17px; }
    .bclose { width: 17px; height: 17px; padding: 0; border: 1px solid; border-color: #fff #716f64 #716f64 #fff; background: #ece9d8; }
    .bclose svg { width: 15px; height: 15px; display: block; }
    .btext { margin: 5px 0 0; padding-left: 6px; line-height: 16px; }
    .link { display: block; margin: 3px 0 0 6px; line-height: 16px; color: #00007c; white-space: nowrap; }
    .tail { position: absolute; right: 51px; top: 75px; width: 46px; height: 20px; }
  `;

  private mode([label, on]: [string, boolean], i: number) {
    return html`<button class=${classMap({ mode: true, on, first: i === 0 })} aria-pressed=${on ? "true" : "false"}>${label}</button>`;
  }

  private drawing() {
    return svg`
      <g transform="translate(.5 .5)">
        <path d="M67 -2V132H1703V-2z" fill="#fff" stroke="#000"/>
        <path d="M247 87l90 85-40 22 105 179-40 21L268 201l-42 18z" fill="#f00" stroke="#000" shape-rendering="crispEdges"/>
        <g fill="none" stroke="#000" shape-rendering="crispEdges">
          <path d="M145 0V54H1626V0M301 0V54M1002 0V54M1486 0V54"/>
          <path d="M496 93H1275"/>
          ${CELL_X.map((x) => svg`<path d="M${x} 54V93"/>`)}
          <path d="M886 15V93M866 35h40L886 74z"/>
          <path d="M100 5V80M1671 5V80" stroke-dasharray="16 9"/>
          <path d="M100 80v7h8M1664 87h7v-7"/>
          <path d="M117 87H884M890 87H1656" stroke-dasharray="16 9"/>
        </g>
        <g font-family="Lato, sans-serif" font-weight="300" font-size="39">
          <text x="318" y="88">1</text>
          <text x="1429" y="88">4</text>
        </g>
        <g fill="none" stroke="#505050" shape-rendering="crispEdges">
          <path d="M531 206h96M580 158v96"/>
          <path d="M577 203h6v6h-6z"/>
        </g>
      </g>
      <path d="M104 132H1703V0h20V151H104z"/>`;
  }

  render() {
    return html`
      <header class="title">
        <svg class="logo" viewBox="0 0 16 16"><rect width="16" height="16" fill="#d9e0c4" stroke="#3d5a3a"/><path d="M0 9l6-5 4 3 6-6v9l-6 2-4 4H0z" fill="#6f9350"/><path d="M3 2h5v4H3zM8 9h5v4H8z" fill="#f4f6ee" stroke="#567"/></svg>
        <h1 class="name">AutoCAD Mechanical - [Výkres2.dwg]</h1>
        <div class="wins">
          <button class="win" aria-label="Minimalizovat"><svg class="g" viewBox="0 0 15 15"><path d="M2 10h7v3H2z" fill="#fff"/></svg></button>
          <button class="win" aria-label="Obnovit"><svg class="g" viewBox="0 0 15 15"><path d="M5 5V2h8v7h-3M2 6h7v7H2zM2 7h7M5 3h8" fill="none" stroke="#fff" stroke-width="1.500"/></svg></button>
          <button class="win shut" aria-label="Zavřít"><svg class="g" viewBox="0 0 15 15"><path d="M3 3l9 9M12 3l-9 9" stroke="#fff" stroke-width="2.200"/></svg></button>
        </div>
      </header>
      <nav class="menu">
        <svg class="doc" viewBox="0 0 15 16"><path d="M0 1h10l5 5v10H0z" fill="#2b4b74"/><path d="M0 16V9q8-3 15 4v3z" fill="#f0c028"/><path d="M0 0h6L4 6 0 4z" fill="#a9cbe6"/><path d="M10 1v5h5" fill="#dde"/></svg>
        ${MENUS.map((m) => html`<button class="menuitem">${m}</button>`)}
        <div class="mdi">
          <button class="mdib" aria-label="Minimalizovat výkres"><svg class="g" viewBox="0 0 15 15"><path d="M4 9h5v2H4z" fill="#444"/></svg></button>
          <button class="mdib" aria-label="Obnovit výkres"><svg class="g" viewBox="0 0 15 15"><path d="M5.500 5V2.500h7v6H10M3 6.500h6.500v5H3zM5 3h8M3 7h6" fill="none" stroke="#444"/></svg></button>
          <button class="mdib" aria-label="Zavřít výkres"><svg class="g" viewBox="0 0 15 15"><path d="M4 3l7 8M11 3l-7 8" stroke="#444" stroke-width="2"/></svg></button>
        </div>
      </nav>
      <div class="row">
        <cad-toolbar .tools=${STANDARD}></cad-toolbar>
        <cad-toolbar .tools=${TEXT}></cad-toolbar>
        <cad-toolbar .tools=${[t("layers", "Správce hladin")]}>
          <div class="combo layer">
            <svg class="li" viewBox="0 0 15 16"><path d="M7 1q5 0 4 5-1 2-2 4H5Q4 8 3 6 2 1 7 1z" fill="#fdf9a8" stroke="#8f8a4a"/><path d="M5 11h4v3H5z" fill="#889"/></svg>
            <svg class="li" viewBox="0 0 15 16"><circle cx="7.500" cy="8" r="6.500" fill="#f4e83c" stroke="#a79d28"/></svg>
            <svg class="li" viewBox="0 0 15 16"><path d="M6 5h8v9H6z" fill="#fff" stroke="#446"/><circle cx="6" cy="6" r="5.500" fill="#f2e636" stroke="#a79d28" stroke-dasharray="2 1"/></svg>
            <svg class="li" viewBox="0 0 15 16"><path d="M1 8V4q0-3 3-3t3 3v3" fill="none" stroke="#a89a14" stroke-width="1.600"/><path d="M6 7h7v7H6z" fill="#f2e636" stroke="#a79d28"/><path d="M9 6V4q2-3 4 0v4" fill="none" stroke="#a89a14" stroke-width="1.600"/></svg>
            <svg class="li" viewBox="0 0 15 16"><path d="M.5 3.500h10v10H.5z" fill="#808080" stroke="#000"/></svg>
            <select aria-label="Hladina"><option>KOTY</option></select>
            <span class="arrow">${chevron(DOWN)}</span>
          </div>
          <button class="solo" aria-label="Nastavit hladinu objektu"><svg viewBox="0 0 16 16">${ICONS.layerCur}</svg></button>
          <button class="solo" aria-label="Předchozí hladina"><svg viewBox="0 0 16 16">${ICONS.layerPrev}</svg></button>
        </cad-toolbar>
        <cad-toolbar .tools=${ZOOM}></cad-toolbar>
        <cad-toolbar .tools=${ORBIT}></cad-toolbar>
      </div>
      <div class="row">
        <cad-toolbar .tools=${DIMS}>
          <div class="combo dimstyle">
            <select aria-label="Kótovací styl"><option>AM_ISO</option></select>
            <span class="arrow">${chevron(DOWN)}</span>
          </div>
          <button class="solo" aria-label="Kótovací styl – správce"><svg viewBox="0 0 16 16">${ICONS.dimStyle}</svg></button>
        </cad-toolbar>
        <cad-toolbar .tools=${DRAW}></cad-toolbar>
      </div>
      <main class="main">
        <div class="side">
          <div class="stack">${SIDE_MECH.map((g) => html`<cad-toolbar vertical .tools=${g}></cad-toolbar>`)}</div>
          <cad-toolbar vertical .tools=${SIDE_MODIFY}></cad-toolbar>
        </div>
        <div class="frame">
          <div class="view">
            <div class="canvas">
              <svg class="sheet">${this.drawing()}</svg>
              <svg class="ucs" viewBox="0 0 64 104">
                <path d="M4.500 6v93.500h57zM4.500 85.500h14v14" fill="none" stroke="#4c4c94"/>
                <g font-family="Lato, sans-serif" font-weight="300" font-size="20" fill="#4c4c94"><text x="5" y="49">Y</text><text x="33" y="99">X</text></g>
              </svg>
            </div>
            <div class="vbar">
              <button class="sb" aria-label="Nahoru">${chevron(UP)}</button>
              <span class="grow"></span>
              <button class="sb" aria-label="Posuvník"><svg class="chev" viewBox="0 0 10 10"><path d="M1 1.500h8M1 4.500h8M1 7.500h8" stroke="#8aa3dc"/></svg></button>
              <button class="sb" aria-label="Dolů">${chevron(DOWN)}</button>
            </div>
          </div>
          <div class="tabs">
            <div class="tabrow">
              ${["M1 0v9M8 0L3 4.500 8 9z", "M7 0L2 4.500 7 9z", "M2 0l5 4.500L2 9z", "M8 0v9M1 0l5 4.500L1 9z"].map((d, i) => html`
                <button class="nav" aria-label="List ${i + 1}"><svg viewBox="0 0 9 9"><path d=${d} stroke="#000"/></svg></button>`)}
              <button class="tab model"><svg viewBox="0 0 42 15" preserveAspectRatio="none"><path d="M0 0l5 14.500h35l2-5" fill="none" stroke="#000" stroke-width="1.300"/></svg><span>Model</span></button>
              <button class="tab layout"><svg viewBox="0 0 70 15" preserveAspectRatio="none"><path d="M-2 -1l6 15.500h61L70 -1z" fill="#fff"/><path d="M-2 0l6 14.500h61L70 0" fill="none" stroke="#000" stroke-width="1.300"/></svg><span>Rozvržení1</span></button>
            </div>
            <div class="hbar"><button class="sb" aria-label="Vlevo">${chevron(LEFT)}</button></div>
          </div>
        </div>
        <aside class="palette">
          <svg class="icon" viewBox="0 0 16 16">${ICONS.props}</svg>
          <span class="above"></span>
          <h2 class="ptitle">VLASTNOSTI</h2>
          <span class="below"></span>
        </aside>
      </main>
      <section class="cmd">
        <div class="cmdin">
          <div class="box">
            <div class="hist">Probíhá regenerace modelu - výřezů v paměti.</div>
            <div class="prompt"><label for="cmd">Příkaz:</label><input id="cmd" type="text" /></div>
          </div>
        </div>
      </section>
      <footer class="status">
        <div class="coord">61.65, -15.36, 0.00</div>
        ${MODES_A.map((m, i) => this.mode(m, i))}
        <div class="vp">
          <button class="vpb" aria-label="Předchozí výřez">◀</button>
          <button class="vpi" aria-label="Maximalizovat výřez"><svg viewBox="0 0 17 17"><path d="M4 1.500h12M1.500 4v12M16 3v13" stroke="#b01838" stroke-dasharray="2 1"/><path d="M5.500 6.500h9v9h-9z" fill="#cfe6f8" stroke="#1d5c94" stroke-width="1.600"/><path d="M8 9h4v4H8z" fill="#8cc4ea"/><path d="M0 0h6L0 6zM1 1l5 5" fill="#1d5c94" stroke="#1d5c94"/></svg></button>
          <button class="vpb" aria-label="Další výřez">▶</button>
        </div>
        ${MODES_B.map((m) => this.mode(m, 1))}
        <div class="tray">
          <svg viewBox="0 0 17 17"><path d="M2 2q0 9 10 9z" fill="#a9c2dc" stroke="#3d5a80"/><path d="M3 2l9 9q2-7-9-9z" fill="#e6eef6" stroke="#3d5a80"/><path d="M8 10l-3 6h8l-3-5" fill="#56719a"/><path d="M9 5l4-3" stroke="#333"/></svg>
          <svg viewBox="0 0 17 17"><path d="M1 1h9v15H1z" fill="#1f5fc0"/><path d="M5 1h11v15H5z" fill="#f2e21e"/><path d="M3 9l5-5v3h3V3h2v8H8v3z" fill="#1f5fc0"/></svg>
          <svg viewBox="0 0 17 17"><path d="M4 8V5q0-4 4.500-4T13 5v3" fill="none" stroke="#444" stroke-width="2"/><rect x="1.500" y="7" width="14" height="9" rx="2" fill="#666" stroke="#222"/><path d="M3 10h11M3 13h11" stroke="#ccc"/></svg>
          <svg viewBox="0 0 17 17"><path d="M1 4l5-3 5 4-3 5-6-1z" fill="#c4d4dc" stroke="#8aa0ac"/><path d="M7.500 7.500h8v9h-8z" fill="#eaf4fb" stroke="#4a7fae"/><path d="M9 10h5M9 12h5M9 14h5" stroke="#4a7fae"/></svg>
        </div>
        <button class="tdrop" aria-label="Nabídka stavového řádku"><svg width="10" height="10" viewBox="0 0 10 10"><path d="M1 5h8L5 9z"/></svg></button>
        <button class="max" aria-label="Čistá obrazovka"><svg viewBox="0 0 17 17"><path d="M1 .8h15v15H1z" fill="#4f8fc4" stroke="#1d4e80" stroke-width="1.500"/><path d="M4 3.500h9v10H4z" fill="#cfe8fa"/></svg></button>
      </footer>
      <div class="balloon" role="status">
        <div class="bhead">
          <svg class="info" viewBox="0 0 17 17"><path d="M8.500 1a7 7 0 0 1 2 13.500L8.500 17V15A7 7 0 0 1 8.500 1z" fill="#eaf0fb" stroke="#8a9ab8"/><path d="M7.500 3.500h2v2h-2zM7 7h3v5h-3zM6.500 12h4" fill="#1f48c8" stroke="#1f48c8" stroke-width=".5"/></svg>
          <h2 class="btitle">Úloha vykreslování a publikování dokončena</h2>
          <button class="bclose" aria-label="Zavřít oznámení"><svg viewBox="0 0 15 15"><path d="M4 3.500l7 8M11 3.500l-7 8" stroke="#000" stroke-width="2"/></svg></button>
        </div>
        <p class="btext">Nenalezeny žádné chyby ani upozornění</p>
        <a class="link" href="#detail">Klepněte pro zobrazení detailů vykreslování a publikování...</a>
        <svg class="tail" viewBox="0 0 46 20"><path d="M4 0L45 18 22 0z" fill="#ffffe1"/><path d="M3 1.500L45 18 22 1.500" fill="none" stroke="#000"/></svg>
      </div>
    `;
  }
}
